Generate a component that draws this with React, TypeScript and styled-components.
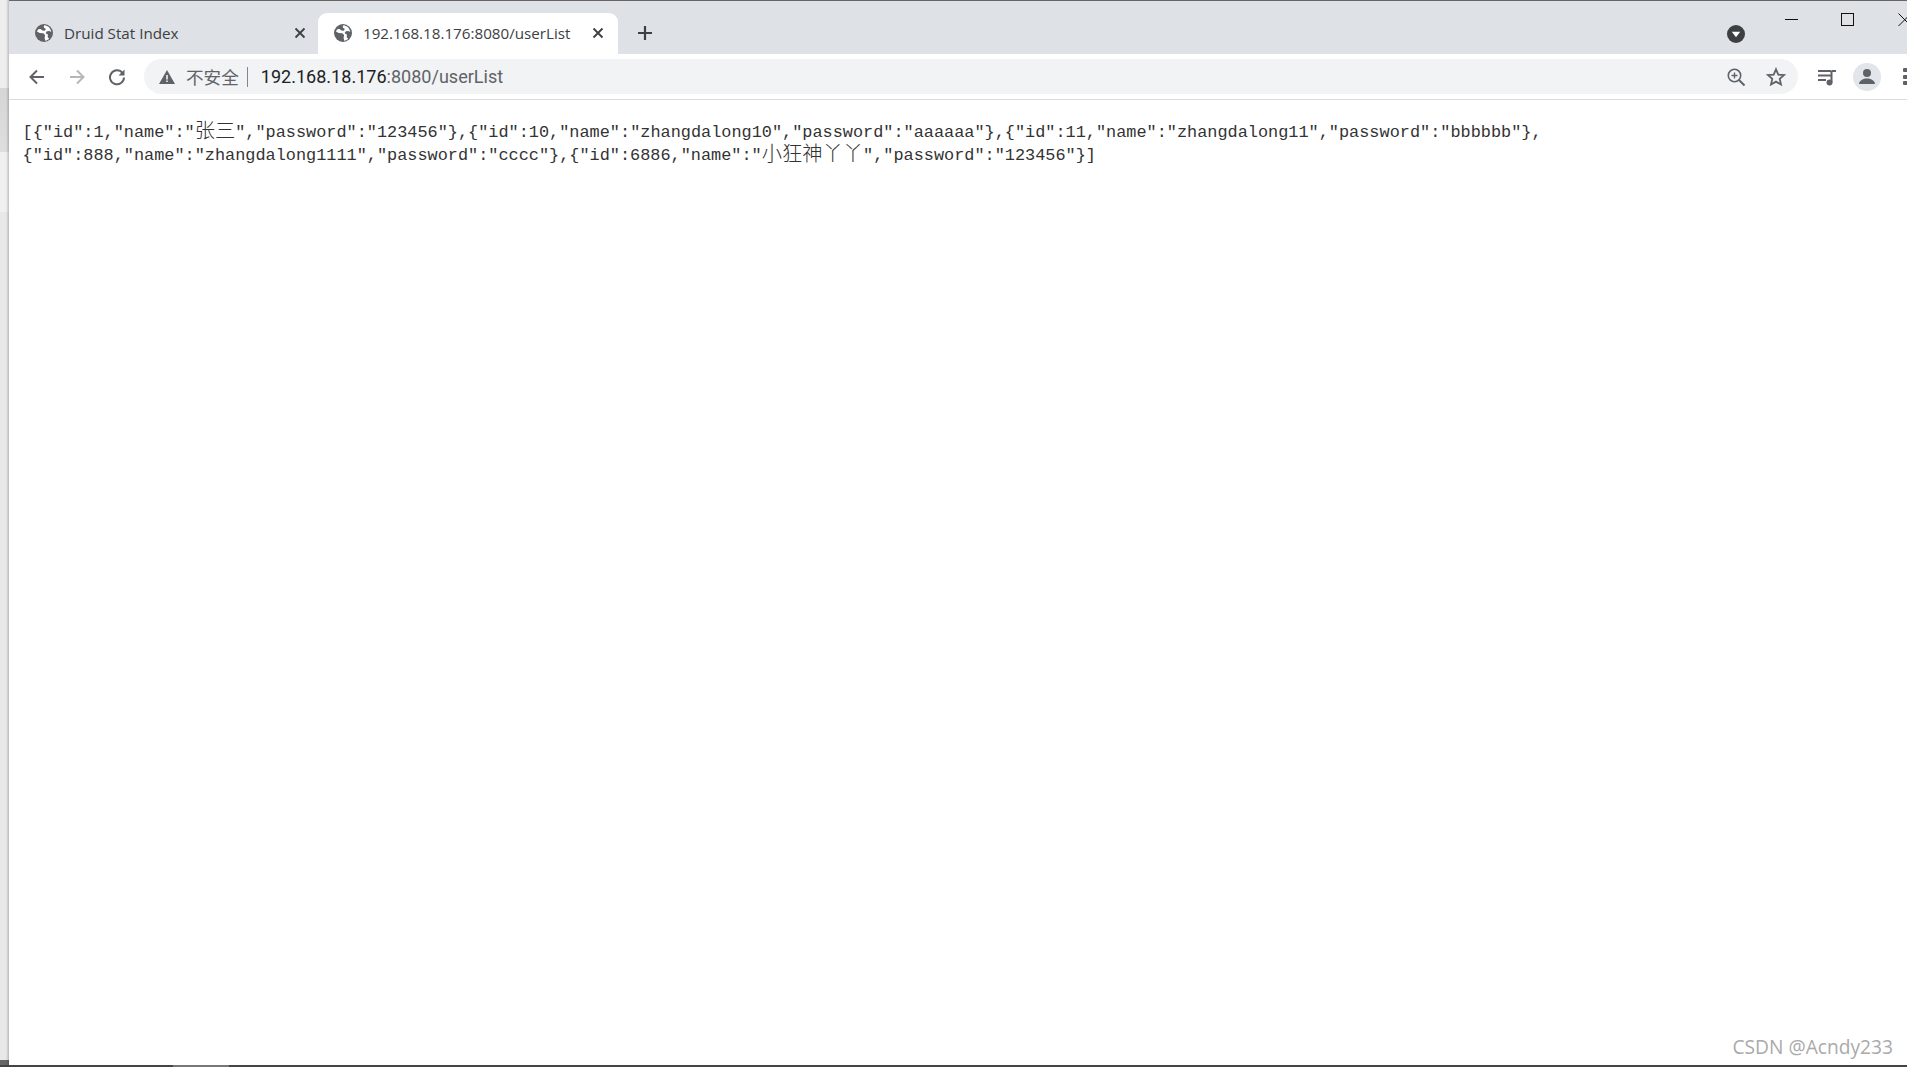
import React from "react";
import styled, { createGlobalStyle } from "styled-components";

const GlobalStyle = createGlobalStyle`
    html, body {
        margin: 0;
        padding: 0;
        height: 100%;
        overflow: hidden;
        background: #fff;
    }
`;

const Screen = styled.div`
    position: relative;
    width: 1907px;
    height: 1067px;
    display: flex;
    flex-direction: column;
    overflow: hidden;
    background: #fff;
`;

const Window = styled.div`
    flex: 1;
    min-height: 0;
    display: flex;
`;

const BottomEdge = styled.div`
    height: 2px;
    flex: none;
    background: linear-gradient(90deg, #444 173px, #777 173px, #777 229px, #444 229px);
`;

const SideStrip = styled.div`
    width: 9px;
    flex: none;
    background:
        linear-gradient(90deg, rgba(255, 255, 255, 0) 6px, rgba(0, 0, 0, 0.2) 9px),
        linear-gradient(
            180deg,
            #eeeeee 88px,
            #d6d6d6 88px,
            #dedede 152px,
            #f0f0f0 152px,
            #f0f0f0 212px,
            #e8e8e8 212px,
            #e8e8e8 1060px,
            #666 1060px
        );
`;

const Browser = styled.div`
    flex: 1;
    min-width: 0;
    display: flex;
    flex-direction: column;
`;

const TabBar = styled.div`
    height: 54px;
    box-sizing: border-box;
    flex: none;
    display: flex;
    align-items: flex-end;
    background: #dee1e6;
    border-top: 1px solid #666;
`;

const Tab = styled.div<{ $active?: boolean }>`
    width: ${({ $active }) => ($active ? 300 : 309)}px;
    height: 41px;
    box-sizing: border-box;
    flex: none;
    display: flex;
    align-items: center;
    padding: 0 ${({ $active }) => ($active ? 14 : 12)}px 1px ${({ $active }) => ($active ? 16 : 26)}px;
    border-radius: 9px 9px 0 0;
    background: ${({ $active }) => ($active ? "#fff" : "transparent")};
    color: #3c4043;
    font: 15.2px "Open Sans", "Liberation Sans", sans-serif;
`;

const TabTitle = styled.span`
    flex: 1;
    margin-left: 11px;
    white-space: nowrap;
    overflow: hidden;
`;

const NewTab = styled.div`
    width: 18px;
    height: 18px;
    margin: 0 0 12px 18px;
    flex: none;
`;

const TabSearch = styled.div`
    width: 18px;
    height: 18px;
    margin: 0 0 11px 1073px;
    flex: none;
`;

const WindowControls = styled.div`
    display: flex;
    align-items: flex-start;
    align-self: flex-start;
    gap: 43px;
    margin: 12px 0 0 39px;
    flex: none;
`;

const Toolbar = styled.div`
    height: 46px;
    flex: none;
    box-sizing: border-box;
    display: flex;
    align-items: center;
    background: #fff;
    border-bottom: 1px solid #dadce0;
    padding: 0 0 0 19px;
`;

const NavButton = styled.div`
    width: 18px;
    height: 18px;
    margin-right: 22px;
    flex: none;
`;

const AddressBar = styled.div`
    width: 1654px;
    height: 35px;
    margin-left: -4px;
    flex: none;
    box-sizing: border-box;
    display: flex;
    align-items: center;
    padding: 0 12px 0 15px;
    background: #f1f3f4;
    border-radius: 18px;
`;

const Security = styled.span`
    margin-left: 11px;
    padding-right: 8px;
    color: #5f6368;
    font: 17.6px "Noto Sans CJK SC", sans-serif;
    line-height: 35px;
`;

const Divider = styled.span`
    width: 1px;
    height: 20px;
    background: #80868b;
    margin-right: 13px;
`;

const Url = styled.span`
    flex: 1;
    color: #5f6368;
    font: 18.05px Roboto, "Liberation Sans", sans-serif;
    white-space: nowrap;
`;

const Host = styled.span`
    color: #202124;
`;

const BarIcon = styled.div`
    width: 20px;
    height: 20px;
    margin-left: 20px;
    flex: none;
`;

const MediaButton = styled.div`
    width: 20px;
    height: 20px;
    margin-left: 19px;
    flex: none;
`;

const Avatar = styled.div`
    width: 28px;
    height: 28px;
    margin-left: 16px;
    border-radius: 50%;
    background: #e2e5ea;
    flex: none;
    display: flex;
    align-items: center;
    justify-content: center;
`;

const MenuDots = styled.div`
    display: flex;
    flex-direction: column;
    gap: 2.5px;
    margin-left: 22px;
    flex: none;
`;

const Dot = styled.span`
    width: 5px;
    height: 4px;
    background: #5f6368;
    border-radius: 1px;
`;

const Page = styled.pre`
    margin: 0;
    padding: 18px 0 0 13.5px;
    flex: 1;
    color: #333;
    font: 16.89px/23px "Liberation Mono", monospace;
`;

const Line = styled.div`
    height: 23px;
    white-space: nowrap;
`;

const Cjk = styled.span`
    display: inline-block;
    height: 23px;
    line-height: 23px;
    font-family: "Noto Sans CJK SC", sans-serif;
    font-weight: 300;
    font-size: 20.27px;
    vertical-align: -1px;
`;

const Watermark = styled.div`
    position: absolute;
    right: 14px;
    bottom: 7px;
    color: #aaa;
    font: 19.2px "Open Sans", sans-serif;
    white-space: nowrap;
`;

const Globe = () => (
    <svg width="18" height="18" viewBox="0 0 18 18" style={{ flex: "none" }}>
        <circle cx="9" cy="9" r="9" fill="#5f6368" />
        <path
            d="M9.500 1.200c-.8.700-1 1.700-.4 2.500l1.700 1.200-.9 1.900-2.500-.3L5.500 5 3.200 5.200 1.900 7.500l2.800 1.600 3.600.1 1.800 1.900-.5 3 .7 2.600c1.500-.2 2.800-.9 3.900-1.900l-1.500-1.500.2-2.700-2.300-1.300 1.200-2 2.600-.2 1.900.9C15.700 4.300 13 1.500 9.500 1.200z"
            fill="#fff"
        />
    </svg>
);

const CloseIcon = () => (
    <svg width="12" height="12" viewBox="0 0 12 12" style={{ flex: "none" }}>
        <path d="M1.500 1.500l9 9M10.500 1.500l-9 9" stroke="#3c4043" strokeWidth="1.800" />
    </svg>
);

const App = () => {
    return (
        <Screen>
            <GlobalStyle />
            <Window>
                <SideStrip />
                <Browser>
                    <TabBar>
                        <Tab>
                            <Globe />
                            <TabTitle>Druid Stat Index</TabTitle>
                            <CloseIcon />
                        </Tab>
                        <Tab $active>
                            <Globe />
                            <TabTitle>192.168.18.176:8080/userList</TabTitle>
                            <CloseIcon />
                        </Tab>
                        <NewTab>
                            <svg width="18" height="18" viewBox="0 0 18 18">
                                <path d="M9 2v14M2 9h14" stroke="#3c4043" strokeWidth="2.200" />
                            </svg>
                        </NewTab>
                        <TabSearch>
                            <svg width="18" height="18" viewBox="0 0 18 18">
                                <circle cx="9" cy="9" r="9" fill="#3c4043" />
                                <path d="M4.800 6.800h8.400L9 12.200z" fill="#fff" />
                            </svg>
                        </TabSearch>
                        <WindowControls>
                            <svg width="14" height="14" viewBox="0 0 14 14">
                                <path d="M1 6.500h13" stroke="#111" strokeWidth="1" />
                            </svg>
                            <svg width="14" height="14" viewBox="0 0 14 14">
                                <rect x="0.500" y="0.500" width="12" height="12" fill="none" stroke="#111" strokeWidth="1" />
                            </svg>
                            <svg width="14" height="14" viewBox="0 0 14 14">
                                <path d="M.5.500l12.500 12.500M13 .5L.5 13" stroke="#111" strokeWidth="1" />
                            </svg>
                        </WindowControls>
                    </TabBar>
                    <Toolbar>
                        <NavButton>
                            <svg width="18" height="18" viewBox="0 0 18 18">
                                <path d="M16 9H3M9 2.500L2.500 9 9 15.500" fill="none" stroke="#5f6368" strokeWidth="2" />
                            </svg>
                        </NavButton>
                        <NavButton>
                            <svg width="18" height="18" viewBox="0 0 18 18">
                                <path d="M2 9h13M9 2.500L15.500 9 9 15.500" fill="none" stroke="#b4b7bb" strokeWidth="2" />
                            </svg>
                        </NavButton>
                        <NavButton>
                            <svg width="18" height="18" viewBox="0 0 18 18">
                                <path d="M14.500 5A7 7 0 1 0 16 9.500" fill="none" stroke="#5f6368" strokeWidth="2" />
                                <path d="M16.500 1.500v6h-6z" fill="#5f6368" />
                            </svg>
                        </NavButton>
                        <AddressBar>
                            <svg width="16" height="14" viewBox="0 0 16 14" style={{ flex: "none" }}>
                                <path d="M8 0l8 14H0z" fill="#5f6368" />
                                <path d="M7.200 5h1.600v4.500H7.200zM7.200 10.500h1.600V12H7.200z" fill="#f1f3f4" />
                            </svg>
                            <Security>不安全</Security>
                            <Divider />
                            <Url>
                                <Host>192.168.18.176</Host>:8080/userList
                            </Url>
                            <BarIcon>
                                <svg width="20" height="20" viewBox="0 0 20 20">
                                    <circle cx="8.500" cy="8.500" r="6.200" fill="none" stroke="#5f6368" strokeWidth="1.600" />
                                    <path d="M13 13l5.500 5.500" stroke="#5f6368" strokeWidth="2" />
                                    <path d="M8.500 5.500v6M5.500 8.500h6" stroke="#5f6368" strokeWidth="1.400" />
                                </svg>
                            </BarIcon>
                            <BarIcon>
                                <svg width="20" height="20" viewBox="0 0 20 20">
                                    <path
                                        d="M10 2.300l2.300 5.300 5.700.5-4.300 3.800 1.300 5.600L10 14.600l-5 2.900 1.300-5.600L2 8.100l5.700-.5z"
                                        fill="none"
                                        stroke="#5f6368"
                                        strokeWidth="1.800"
                                    />
                                </svg>
                            </BarIcon>
                        </AddressBar>
                        <MediaButton>
                            <svg width="20" height="20" viewBox="0 0 20 20">
                                <path d="M1 4h13M1 8.500h13M1 13h8" stroke="#5f6368" strokeWidth="2" />
                                <path d="M14.500 4H19M14.500 4v11.500" stroke="#5f6368" strokeWidth="2" fill="none" />
                                <circle cx="12.500" cy="15.500" r="3" fill="#5f6368" />
                            </svg>
                        </MediaButton>
                        <Avatar>
                            <svg width="22" height="22" viewBox="0 0 22 22">
                                <circle cx="11" cy="7" r="4" fill="#5f6368" />
                                <path d="M3 18c0-3.500 4.500-5.500 8-5.500s8 2 8 5.500z" fill="#5f6368" />
                            </svg>
                        </Avatar>
                        <MenuDots>
                            <Dot />
                            <Dot />
                            <Dot />
                        </MenuDots>
                    </Toolbar>
                    <Page>
                        <Line>
                            {'[{"id":1,"name":"'}
                            <Cjk>张三</Cjk>
                            {'","password":"123456"},{"id":10,"name":"zhangdalong10","password":"aaaaaa"},{"id":11,"name":"zhangdalong11","password":"bbbbbb"},'}
                        </Line>
                        <Line>
                            {'{"id":888,"name":"zhangdalong1111","password":"cccc"},{"id":6886,"name":"'}
                            <Cjk>小狂神丫丫</Cjk>
                            {'","password":"123456"}]'}
                        </Line>
                    </Page>
                </Browser>
            </Window>
            <BottomEdge />
            <Watermark>CSDN @Acndy233</Watermark>
        </Screen>
    );
};

export default App;
